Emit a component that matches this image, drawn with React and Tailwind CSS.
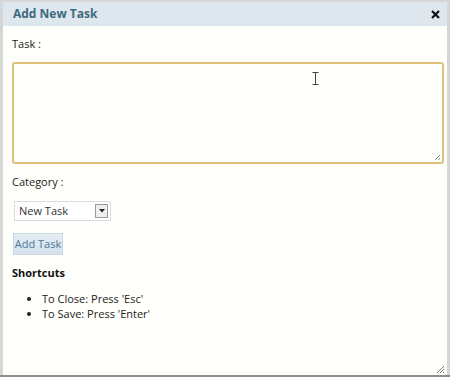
export default function App() {
  return (
    <div
      className="w-[450px] h-[377px] bg-[#d6d6d6] pt-[2px] pl-[3px] pr-[3px] border-b-2 border-[#8e8e8e] flex flex-col"
      style={{ fontFamily: '"Open Sans", "Noto Sans", sans-serif' }}
    >
      <div className="h-[24px] bg-[#dfe7ee] flex items-center justify-between pl-[10px] pr-[6px] shrink-0">
        <span className="text-[12px] font-bold text-[#3e6a80]">Add New Task</span>
        <svg width="9" height="9" viewBox="0 0 9 9" className="mr-[1px]">
          <path d="M1 1 L8 8 M8 1 L1 8" stroke="#111" strokeWidth="2.2" />
        </svg>
      </div>
      <div className="relative flex-1 bg-[#fffffb] pl-[9px] pr-[3px] pt-[10px] text-[11px] text-[#222]">
        <div className="h-[16px] leading-[16px]">Task :</div>
        <div className="mt-[10px] h-[102px] border-2 border-[#dcc07c] rounded-[3px] bg-[#fffffb] relative">
          <svg className="absolute left-[298px] top-[8px]" width="7" height="13" viewBox="0 0 7 13">
            <path d="M0.5 0.5 H6.5 M3.5 0.5 V12.5 M0.5 12.5 H6.5" stroke="#444" strokeWidth="1" fill="none" />
          </svg>
          <svg className="absolute right-[1px] bottom-[1px]" width="7" height="7" viewBox="0 0 7 7">
            <path d="M6 1 L1 6 M6 4 L4 6" stroke="#8a8a8a" strokeWidth="1" />
          </svg>
        </div>
        <div className="mt-[10px] h-[16px] leading-[16px]">Category :</div>
        <div className="mt-[11px] ml-[2px] w-[97px] h-[20px] border border-[#dcdcdc] bg-white flex items-center justify-between pl-[4px] pr-[2px]">
          <span className="text-[#333]">New Task</span>
          <span className="w-[13px] h-[14px] border border-[#9a9a9a] bg-[#eeeeee] flex items-center justify-center">
            <svg width="6" height="4" viewBox="0 0 6 4">
              <path d="M0 0 L6 0 L3 3.5 Z" fill="#222" />
            </svg>
          </span>
        </div>
        <button className="mt-[12px] ml-[1px] h-[22px] w-[50px] border border-[#ccd9e2] bg-gradient-to-b from-[#e4edf4] to-[#d3e1eb] text-[#4d7896] text-[11px]">
          Add Task
        </button>
        <div className="mt-[10px] font-bold text-[#111]">Shortcuts</div>
        <ul className="mt-[9px] pl-[30px] list-disc leading-[15px] text-[#222]">
          <li>To Close: Press 'Esc'</li>
          <li>To Save: Press 'Enter'</li>
        </ul>
        <svg className="absolute right-[2px] bottom-[1px]" width="9" height="9" viewBox="0 0 9 9">
          <path d="M8 1 L1 8 M8 4 L4 8 M8 7 L7 8" stroke="#7a7a7a" strokeWidth="1" />
        </svg>
      </div>
    </div>
  );
}
